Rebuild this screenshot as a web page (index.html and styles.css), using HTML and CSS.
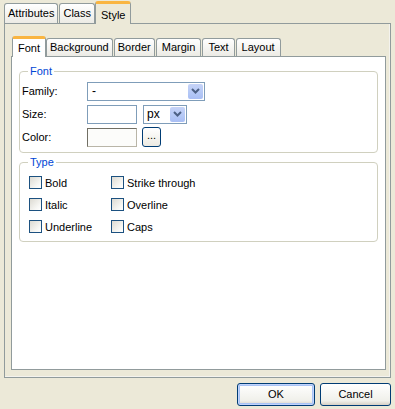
FILE: index.html
```html
<!DOCTYPE html>
<html lang="en">
<head>
    <meta charset="UTF-8">
    <title>Style</title>
    <link rel="stylesheet" href="styles.css">
</head>
<body>
    <div class="dialog">
        <div class="tabs outer-tabs">
            <div class="tab">Attributes</div>
            <div class="tab">Class</div>
            <div class="tab active">Style</div>
        </div>
        <div class="panel outer-panel">
            <div class="tabs inner-tabs">
                <div class="tab active">Font</div>
                <div class="tab">Background</div>
                <div class="tab">Border</div>
                <div class="tab wide">Margin</div>
                <div class="tab wide">Text</div>
                <div class="tab wide">Layout</div>
            </div>
            <div class="panel inner-panel">
                <fieldset class="group font-group">
                    <legend>Font</legend>
                    <div class="row">
                        <label>Family:</label>
                        <div class="select family">
                            <span class="value">-</span>
                            <span class="drop"><svg width="9" height="6" viewBox="0 0 9 6"><path d="M1 1l3.5 3.5L8 1" fill="none" stroke="#4d6185" stroke-width="2"/></svg></span>
                        </div>
                    </div>
                    <div class="row">
                        <label>Size:</label>
                        <div class="textbox"></div>
                        <div class="select unit">
                            <span class="value">px</span>
                            <span class="drop"><svg width="9" height="6" viewBox="0 0 9 6"><path d="M1 1l3.5 3.5L8 1" fill="none" stroke="#4d6185" stroke-width="2"/></svg></span>
                        </div>
                    </div>
                    <div class="row">
                        <label>Color:</label>
                        <div class="textbox color"></div>
                        <div class="pick">...</div>
                    </div>
                </fieldset>
                <fieldset class="group type-group">
                    <legend>Type</legend>
                    <div class="checks">
                        <div class="check"><span class="box"></span>Bold</div>
                        <div class="check"><span class="box"></span>Strike through</div>
                        <div class="check"><span class="box"></span>Italic</div>
                        <div class="check"><span class="box"></span>Overline</div>
                        <div class="check"><span class="box"></span>Underline</div>
                        <div class="check"><span class="box"></span>Caps</div>
                    </div>
                </fieldset>
            </div>
        </div>
        <div class="buttons">
            <div class="button default">OK</div>
            <div class="button">Cancel</div>
        </div>
    </div>
</body>
</html>
```

FILE: styles.css
```css
body {
    margin: 0;
    background: #ece9d8;
    font-family: "Liberation Sans", Arial, sans-serif;
    font-size: 11px;
    color: #000;
}
.dialog {
    width: 395px;
    height: 409px;
    padding: 1px 0 0 4px;
    box-sizing: border-box;
}
.tabs {
    display: flex;
    align-items: flex-end;
    position: relative;
    z-index: 1;
}
.tab {
    height: 19px;
    line-height: 19px;
    padding: 0 3px;
    margin-right: 1px;
    border: 1px solid #919b9c;
    border-bottom: none;
    border-radius: 3px 3px 0 0;
    background: linear-gradient(#ffffff, #ecebe5);
}
.tab.active {
    height: 21px;
    line-height: 22px;
    border-top: 3px solid #f9b541;
    background: #fcfcfe;
    margin-bottom: -1px;
    margin-left: -1px;
    margin-right: 0;
}
.outer-tabs .tab.active {
    background: #ece9d8;
    height: 20px;
    padding: 0 5px;
}
.panel {
    border: 1px solid #919b9c;
}
.outer-panel {
    width: 387px;
    height: 355px;
    padding: 12px 4px 0 6px;
    box-sizing: border-box;
    box-shadow: inset -1px -1px 0 #f4f3ee;
}
.inner-tabs {
    margin-left: 1px;
}
.inner-tabs .tab {
    height: 17px;
    line-height: 17px;
    padding: 0 3px;
}
.inner-tabs .tab.wide {
    padding: 0 5px;
}
.inner-tabs .tab.active {
    height: 18px;
    line-height: 19px;
    padding: 0 5px;
    margin-left: 0;
    background: #fff;
}
.inner-panel {
    background: #fff;
    height: 314px;
    box-sizing: border-box;
    padding: 8px 7px 0 7px;
}
.group {
    margin: 0 0 3px 0;
    padding: 4px 10px 2px 2px;
    border: 1px solid #d0d0bf;
    border-radius: 4px;
}
.group legend {
    color: #0046d5;
    padding: 0 2px;
    margin-left: 6px;
    font-size: 11px;
}
.row {
    display: flex;
    align-items: center;
    height: 20px;
    margin-bottom: 3px;
}
.row label {
    width: 65px;
}
.select {
    height: 19px;
    box-sizing: border-box;
    border: 1px solid #7f9db9;
    display: flex;
    align-items: center;
    justify-content: space-between;
    padding: 0 1px 0 4px;
    background: #fff;
}
.select.family {
    width: 118px;
}
.select.unit {
    width: 44px;
    margin-left: 6px;
    padding-left: 3px;
}
.select .value {
    font-size: 12px;
}
.drop {
    width: 15px;
    height: 15px;
    border-radius: 2px;
    background: linear-gradient(#c6d3f7, #b4c8f6 60%, #a9bef4);
    display: flex;
    align-items: center;
    justify-content: center;
}
.textbox {
    width: 50px;
    height: 19px;
    box-sizing: border-box;
    border: 1px solid #7f9db9;
    background: #fff;
}
.textbox.color {
    border: 1px solid #b9b5a7;
    border-left-color: #716f64;
    border-top-color: #716f64;
    background: #fcfcfa;
}
.pick {
    width: 19px;
    height: 20px;
    margin-left: 5px;
    box-sizing: border-box;
    border: 1px solid #003c74;
    border-radius: 3px;
    background: linear-gradient(#ffffff, #eceae2);
    text-align: center;
    line-height: 14px;
    font-size: 11px;
}
.type-group {
    padding-top: 8px;
    padding-bottom: 8px;
}
.checks {
    display: grid;
    grid-template-columns: 82px auto;
    row-gap: 9px;
    padding-left: 7px;
}
.check {
    display: flex;
    align-items: center;
    height: 13px;
}
.box {
    width: 13px;
    height: 13px;
    box-sizing: border-box;
    border: 1px solid #1c5180;
    background: linear-gradient(135deg, #dcdad2, #f7f7f4 70%, #fff);
    margin-right: 3px;
}
.buttons {
    display: flex;
    justify-content: flex-end;
    gap: 5px;
    padding: 5px 4px 0 0;
}
.button {
    width: 71px;
    height: 23px;
    box-sizing: border-box;
    border: 1px solid #003c74;
    border-radius: 3px;
    background: linear-gradient(#ffffff, #f0f0ea 80%, #d6d0c5);
    text-align: center;
    line-height: 20px;
    font-size: 11px;
}
.button.default {
    width: 78px;
    box-shadow: inset 0 0 0 1px #c1d3fb, inset 0 0 0 2px #a8c3f5;
}
```
